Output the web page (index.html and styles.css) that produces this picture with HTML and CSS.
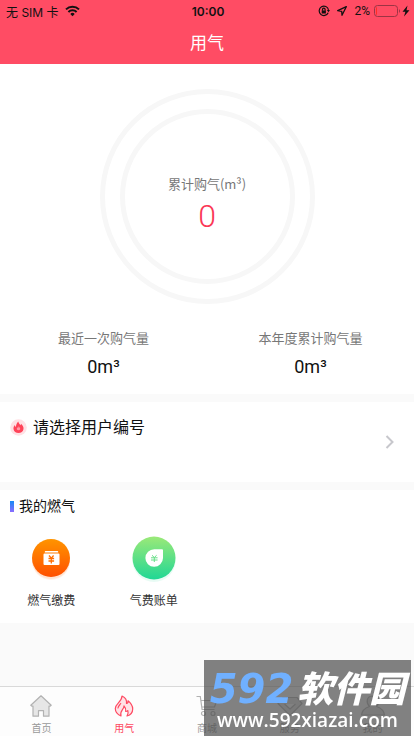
FILE: index.html
```html
<!DOCTYPE html>
<html lang="zh-CN">
<head>
<meta charset="utf-8">
<meta name="viewport" content="width=device-width, initial-scale=1">
<title>用气</title>
<link rel="stylesheet" href="styles.css">
</head>
<body>
<header class="header">
  <div class="status">
    <div class="status-side">
      <span>无 SIM 卡</span>
      <svg width="15" height="12" viewBox="0 0 15 12" fill="none" stroke="#111" stroke-width="2"><path d="M1 4.4a9.2 9.2 0 0 1 13 0M3.4 7a5.8 5.8 0 0 1 8.200 0"/><path d="M5.300 8.900a3.100 3.100 0 0 1 4.400 0L7.500 11.200z" fill="#111" stroke="none"/></svg>
    </div>
    <strong class="clock">10:00</strong>
    <div class="status-side status-right">
      <svg width="12" height="12" viewBox="0 0 12 12" fill="none" stroke="#111" stroke-width="1.200"><path d="M10.200 7.800A4.700 4.700 0 1 1 10.500 4.800"/><path d="M8.800 5h3.200l-1.500 2.200z" fill="#111" stroke="none"/><path d="M3.700 5.500h4.200v3H3.700z" fill="#111" stroke="none"/><path d="M4.500 5.700V4.500a1.300 1.300 0 0 1 2.600 0v1.200"/></svg>
      <svg class="locate" width="10" height="10" viewBox="0 0 10 10" fill="none" stroke="#111" stroke-width="1.300" stroke-linejoin="round"><path d="M9.300.7.700 4.700l4 .6.300 4z"/></svg>
      <span class="percent">2%</span>
      <svg width="36" height="12" viewBox="0 0 36 12"><rect x=".5" y=".5" width="23" height="11" rx="3" fill="none" stroke="#9c3444"/><path d="M2 3.500Q2 2 3 2v8Q2 10 2 8.500z" fill="#ff2e26"/><path d="M25 4q2 2 0 4z" fill="#9c3444"/><path d="M33.500.5 28.500 6.700h2.900L30 11.500 35.500 5.200h-3z" fill="#111"/></svg>
    </div>
  </div>
  <h1 class="title">用气</h1>
</header>

<main class="main">
  <section class="panel usage">
    <div class="ring">
      <div class="ring-inner">
        <span class="label">累计购气(m³)</span>
        <span class="total">0</span>
      </div>
    </div>
    <dl class="stats">
      <div class="stat"><dt class="label">最近一次购气量</dt><dd class="value">0m³</dd></div>
      <div class="stat"><dt class="label">本年度累计购气量</dt><dd class="value">0m³</dd></div>
    </dl>
  </section>

  <button class="panel account" type="button">
    <span class="account-name">
      <svg width="17" height="17" viewBox="0 0 17 17"><circle cx="8.500" cy="8.500" r="8.300" fill="#ffe1e5"/><path d="M8.200 2.500c.4 1.600 1.400 2.400 2.100 3.800.5-.4.700-1 .7-1.600 1.700 1.500 2.800 3.300 2.500 5.300-.3 2.500-2.400 4-5 4s-4.700-1.500-5-4c-.2-1.500.4-2.900 1.400-4 .1 1 .4 1.600 1 2 .1-2 .9-4 2.300-5.500z" fill="#ff4459"/><path d="M8.600 7.200c1.200 1.300 2 2.200 1.500 3.300-.6 1.100-2.600 1.100-3.200 0-.3-.9.100-1.600.700-2.200l.5.700z" fill="#ff9aa6"/></svg>
      <span>请选择用户编号</span>
    </span>
    <svg width="10" height="14" viewBox="0 0 10 14" fill="none" stroke="#c7c7cc" stroke-width="2"><path d="m1.500 1 6 6-6 6"/></svg>
  </button>

  <section class="panel services">
    <h2 class="heading">我的燃气</h2>
    <nav class="grid">
      <a class="service" href="#pay">
        <svg width="50" height="50" viewBox="0 0 50 50">
          <defs><linearGradient id="orange" x2="0" y2="1"><stop stop-color="#ff9400"/><stop offset="1" stop-color="#ff5000"/></linearGradient></defs>
          <circle cx="25" cy="28" r="19" fill="#ff6500" opacity=".08"/><circle cx="25" cy="27" r="19" fill="#ff6500" opacity=".1"/>
          <circle cx="25" cy="25" r="19" fill="url(#orange)"/>
          <path d="M19.500 18h12q.7 0 .7.700v.8H18.800v-.8q0-.7.700-.7zM18.500 20.500h14q1 0 1 1v9.500q0 1-1 1h-14q-1 0-1-1v-9.500q0-1 1-1z" fill="#fff"/>
          <path d="m23 22.500 2.300 2.600 2.300-2.600M25.300 25v5.500M22.500 25.500h5.600M22.500 28h5.600" fill="none" stroke="#ff6d00" stroke-width="1.300"/>
        </svg>
        <span>燃气缴费</span>
      </a>
      <a class="service" href="#bill">
        <svg width="50" height="50" viewBox="0 0 50 50">
          <defs><linearGradient id="green" x2="0" y2="1"><stop stop-color="#9be978"/><stop offset="1" stop-color="#20d795"/></linearGradient></defs>
          <circle cx="25" cy="27.500" r="21.500" fill="#20d795" opacity=".1"/>
          <circle cx="25" cy="25" r="21.500" fill="url(#green)"/>
          <path d="M25.300 16.200h7.700q1 0 1 1v7.900a8.800 8.800 0 1 1-8.700-8.900z" fill="#fff"/>
          <path d="m23 22.300 2.300 2.200 2.300-2.200M25.300 24.500v4.500M22 24.800h6.600M22 27h6.600" fill="none" stroke="#67df88" stroke-width="1"/>
        </svg>
        <span>气费账单</span>
      </a>
    </nav>
  </section>
</main>

<nav class="tabs">
  <a class="tab" href="#home"><svg width="22" height="22" viewBox="0 0 22 22" fill="#e6e6e6" stroke="#b2b2b2" stroke-width="1.200" stroke-linejoin="round"><path d="M11 .8.8 10.300 2 11.200h1v10h5.500v-5.500h5v5.500H19v-10h1l1.200-.9z"/></svg><span>首页</span></a>
  <a class="tab tab-active" href="#gas" aria-current="page"><svg width="22" height="22" viewBox="0 0 22 22" fill="#ffe2e6" stroke="#fe4a62" stroke-width="1.200" stroke-linecap="round" stroke-linejoin="round"><path d="M8 21C4.500 19.500 2.300 17 2.300 13.500c0-5 6.700-6.500 6.700-12.500 3.500 1.500 5 4 4.500 7.500 1.300-.3 1.700-1.300 1.500-2.700 2.500 2 4.700 4.700 4.700 8.200 0 3.700-2.200 6-5.700 7 1.200-1.800 1.500-3.700.8-5.500-.5.700-1.300 1-2.100 1 .3-2.300-.2-4-1.700-5.500.2 3.500-4.700 4.500-3 10z"/><path d="M5 13c.3-2 1.700-3 2.700-4.500" fill="none"/></svg><span>用气</span></a>
  <a class="tab" href="#mall"><svg width="22" height="22" viewBox="0 0 22 22" fill="none" stroke="#b2b2b2" stroke-width="1.200"><path d="M.5 1.500h3.800l1.800 13h12.400M4.800 5.500h16L18.500 12H5.700"/><circle cx="7.500" cy="18.500" r="2"/><circle cx="17" cy="18.500" r="2"/></svg><span>商城</span></a>
  <a class="tab" href="#service"><svg width="26" height="22" viewBox="0 0 26 22" fill="#e6e6e6" stroke="#b2b2b2" stroke-width="1.200" stroke-linejoin="round"><path d="M6 2.500h14l5 6L13 20.500 1 8.500zM7.500 9l5.500 5 5.500-5"/></svg><span>服务</span></a>
  <a class="tab" href="#me"><svg width="26" height="22" viewBox="0 0 26 22" fill="#e6e6e6" stroke="#b2b2b2" stroke-width="1.200" stroke-linejoin="round"><path d="M13 1c7 0 7 7 3.500 10.500 4.500 1.500 7.500 4 8 8.500h-23c.5-4.500 3.500-7 8-8.500C6 8 6 1 13 1z"/></svg><span>我的</span></a>
</nav>

<aside class="mark">
  <p class="mark-name"><span class="mark-number">592</span><span>软件园</span></p>
  <p class="mark-site">www.592xiazai.com</p>
</aside>
</body>
</html>
```
FILE: styles.css
```css
* {
  box-sizing: border-box;
  margin: 0;
  padding: 0;
}

body {
  display: flex;
  flex-direction: column;
  min-height: 100vh;
  background: #fafafa;
  color: #111;
  font-family: Inter, "Noto Sans CJK SC", sans-serif;
}

svg {
  display: block;
  flex: none;
}

a {
  color: inherit;
  text-decoration: none;
}

.header {
  background: #ff4c64;
}

.status {
  display: grid;
  grid-template-columns: 1fr auto 1fr;
  align-items: center;
  height: 22px;
  padding: 0 4px 0 6px;
  font-size: 12px;
}

.status-side {
  display: flex;
  align-items: center;
  gap: 6px;
}

.status-right {
  justify-content: flex-end;
  gap: 4px;
}

.locate {
  margin: 0 3px;
}

.percent {
  font-family: Roboto, sans-serif;
}

.clock {
  font-weight: 600;
}

.title {
  height: 42px;
  color: #fff;
  font-size: 17px;
  font-weight: 400;
  line-height: 42px;
  text-align: center;
}

.main {
  display: flex;
  flex: 1;
  flex-direction: column;
  gap: 8px;
}

.panel {
  background: #fff;
}

.usage {
  padding: 25px 0 14px;
}

.ring {
  width: 215px;
  height: 215px;
  margin: 0 auto;
  padding: 15px;
  border: 5px solid #f7f7f7;
  border-radius: 50%;
}

.ring-inner {
  display: flex;
  flex-direction: column;
  align-items: center;
  height: 100%;
  padding-top: 60px;
  border: 5px solid #f7f7f7;
  border-radius: 50%;
}

.label {
  color: #777;
  font-family: "Noto Sans CJK SC", sans-serif;
  font-size: 13px;
  line-height: 20px;
}

.total {
  color: #fb3756;
  font-family: Roboto, sans-serif;
  font-size: 32px;
  font-weight: 300;
  line-height: 44px;
}

.stats {
  display: grid;
  grid-template-columns: 1fr 1fr;
  padding-top: 24px;
  text-align: center;
}

.value {
  padding-top: 6px;
  font-family: Roboto, sans-serif;
  font-size: 18px;
  line-height: 26px;
}

.account {
  display: flex;
  align-items: center;
  justify-content: space-between;
  width: 100%;
  height: 80px;
  padding: 0 19px 0 10px;
  border: 0;
  color: inherit;
  font: inherit;
  font-size: 16px;
}

.account-name {
  display: flex;
  align-items: center;
  align-self: flex-start;
  gap: 6px;
  padding-top: 12px;
  line-height: 26px;
}

.services {
  padding: 6px 0 12px;
}

.heading {
  display: flex;
  align-items: center;
  gap: 5px;
  padding-left: 10px;
  font-size: 14px;
  font-weight: 400;
  line-height: 20px;
}

.heading::before {
  width: 4px;
  height: 11px;
  background: linear-gradient(#168af5, #8b6cff);
  content: "";
}

.grid {
  display: grid;
  grid-template-columns: repeat(4, 1fr);
  padding: 17px 4px 0 0;
}

.service {
  display: flex;
  flex-direction: column;
  align-items: center;
  gap: 8px;
  color: #333;
  font-size: 12px;
  line-height: 20px;
}

.tabs {
  display: grid;
  grid-template-columns: repeat(5, 1fr);
  height: 50px;
  padding-top: 8px;
  border-top: 1px solid #d9d9d9;
  background: #fdfdfd;
}

.tab {
  display: flex;
  flex-direction: column;
  align-items: center;
  gap: 4px;
  color: #999;
  font-size: 10px;
  line-height: 14px;
}

.tab-active {
  color: #fe4a62;
}

.mark {
  position: fixed;
  right: 3px;
  bottom: 0;
  width: 207px;
  height: 76px;
  padding-top: 9px;
  background: rgba(80, 80, 80, 0.72);
  color: #fff;
  text-align: center;
  white-space: nowrap;
}

.mark-name {
  display: flex;
  align-items: center;
  justify-content: center;
  gap: 4px;
  height: 40px;
  font-size: 36px;
  font-style: italic;
  font-weight: 900;
  line-height: 40px;
}

.mark-number {
  color: #70b0ff;
  font-family: "DejaVu Sans", sans-serif;
  font-size: 40px;
  font-weight: 700;
}

.mark-site {
  font-family: "Open Sans", sans-serif;
  font-size: 19px;
  font-weight: 600;
  line-height: 22px;
}
```
